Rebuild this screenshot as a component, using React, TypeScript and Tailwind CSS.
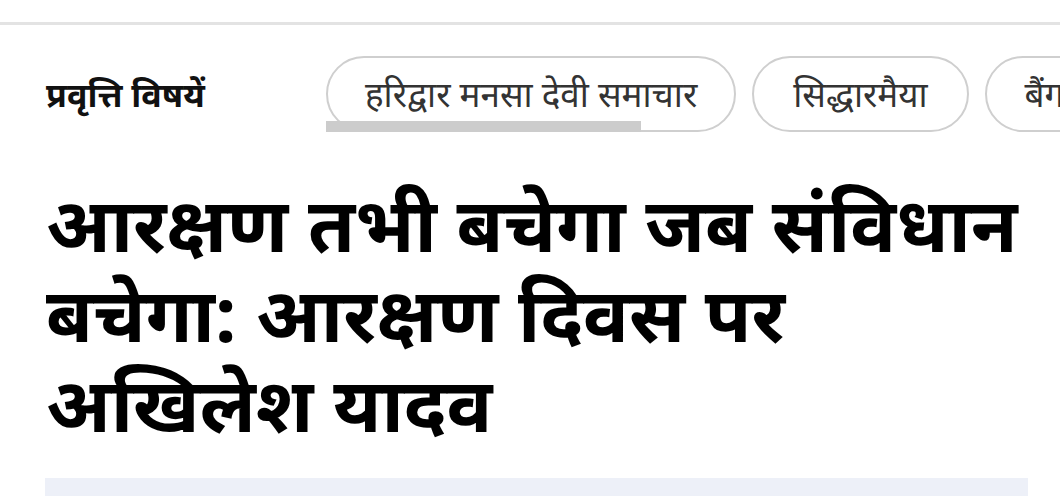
export default function App() {
  return (
    <div className="w-[1060px] h-[496px] overflow-hidden bg-white" style={{ fontFamily: '"Noto Sans", "Noto Sans Devanagari", sans-serif' }}>
      <div className="h-[22px]" />
      <div className="h-[3px] bg-[#e3e3e3]" />
      <div className="flex items-center h-[76px] mt-[31px] pl-[46px] overflow-hidden">
        <div className="shrink-0 w-[280px] text-[34px] font-bold text-[#111] whitespace-nowrap">प्रवृत्ति विषयें</div>
        <div className="relative flex gap-[16px] shrink-0 h-[76px]">
          <div className="shrink-0 h-[76px] px-[37px] flex items-center rounded-full border-2 border-[#cfcfcf] text-[35px] text-[#333] whitespace-nowrap">हरिद्वार मनसा देवी समाचार</div>
          <div className="shrink-0 h-[76px] px-[39px] flex items-center rounded-full border-2 border-[#cfcfcf] text-[35px] text-[#333] whitespace-nowrap">सिद्धारमैया</div>
          <div className="shrink-0 h-[76px] px-[38px] flex items-center rounded-full border-2 border-[#cfcfcf] text-[35px] text-[#333] whitespace-nowrap">बैंगलोर भगदड़</div>
          <div className="absolute left-0 bottom-0 w-[315px] h-[11px] bg-[#cccccc]" />
        </div>
      </div>
      <h1 className="pl-[46px] pr-[24px] mt-[46px] text-[76px] leading-[90px] font-bold text-black">आरक्षण तभी बचेगा जब संविधान बचेगा: आरक्षण दिवस पर अखिलेश यादव</h1>
      <div className="ml-[45px] mr-[32px] mt-[30px] h-[40px] bg-[#edf0f8]" />
    </div>
  );
}
